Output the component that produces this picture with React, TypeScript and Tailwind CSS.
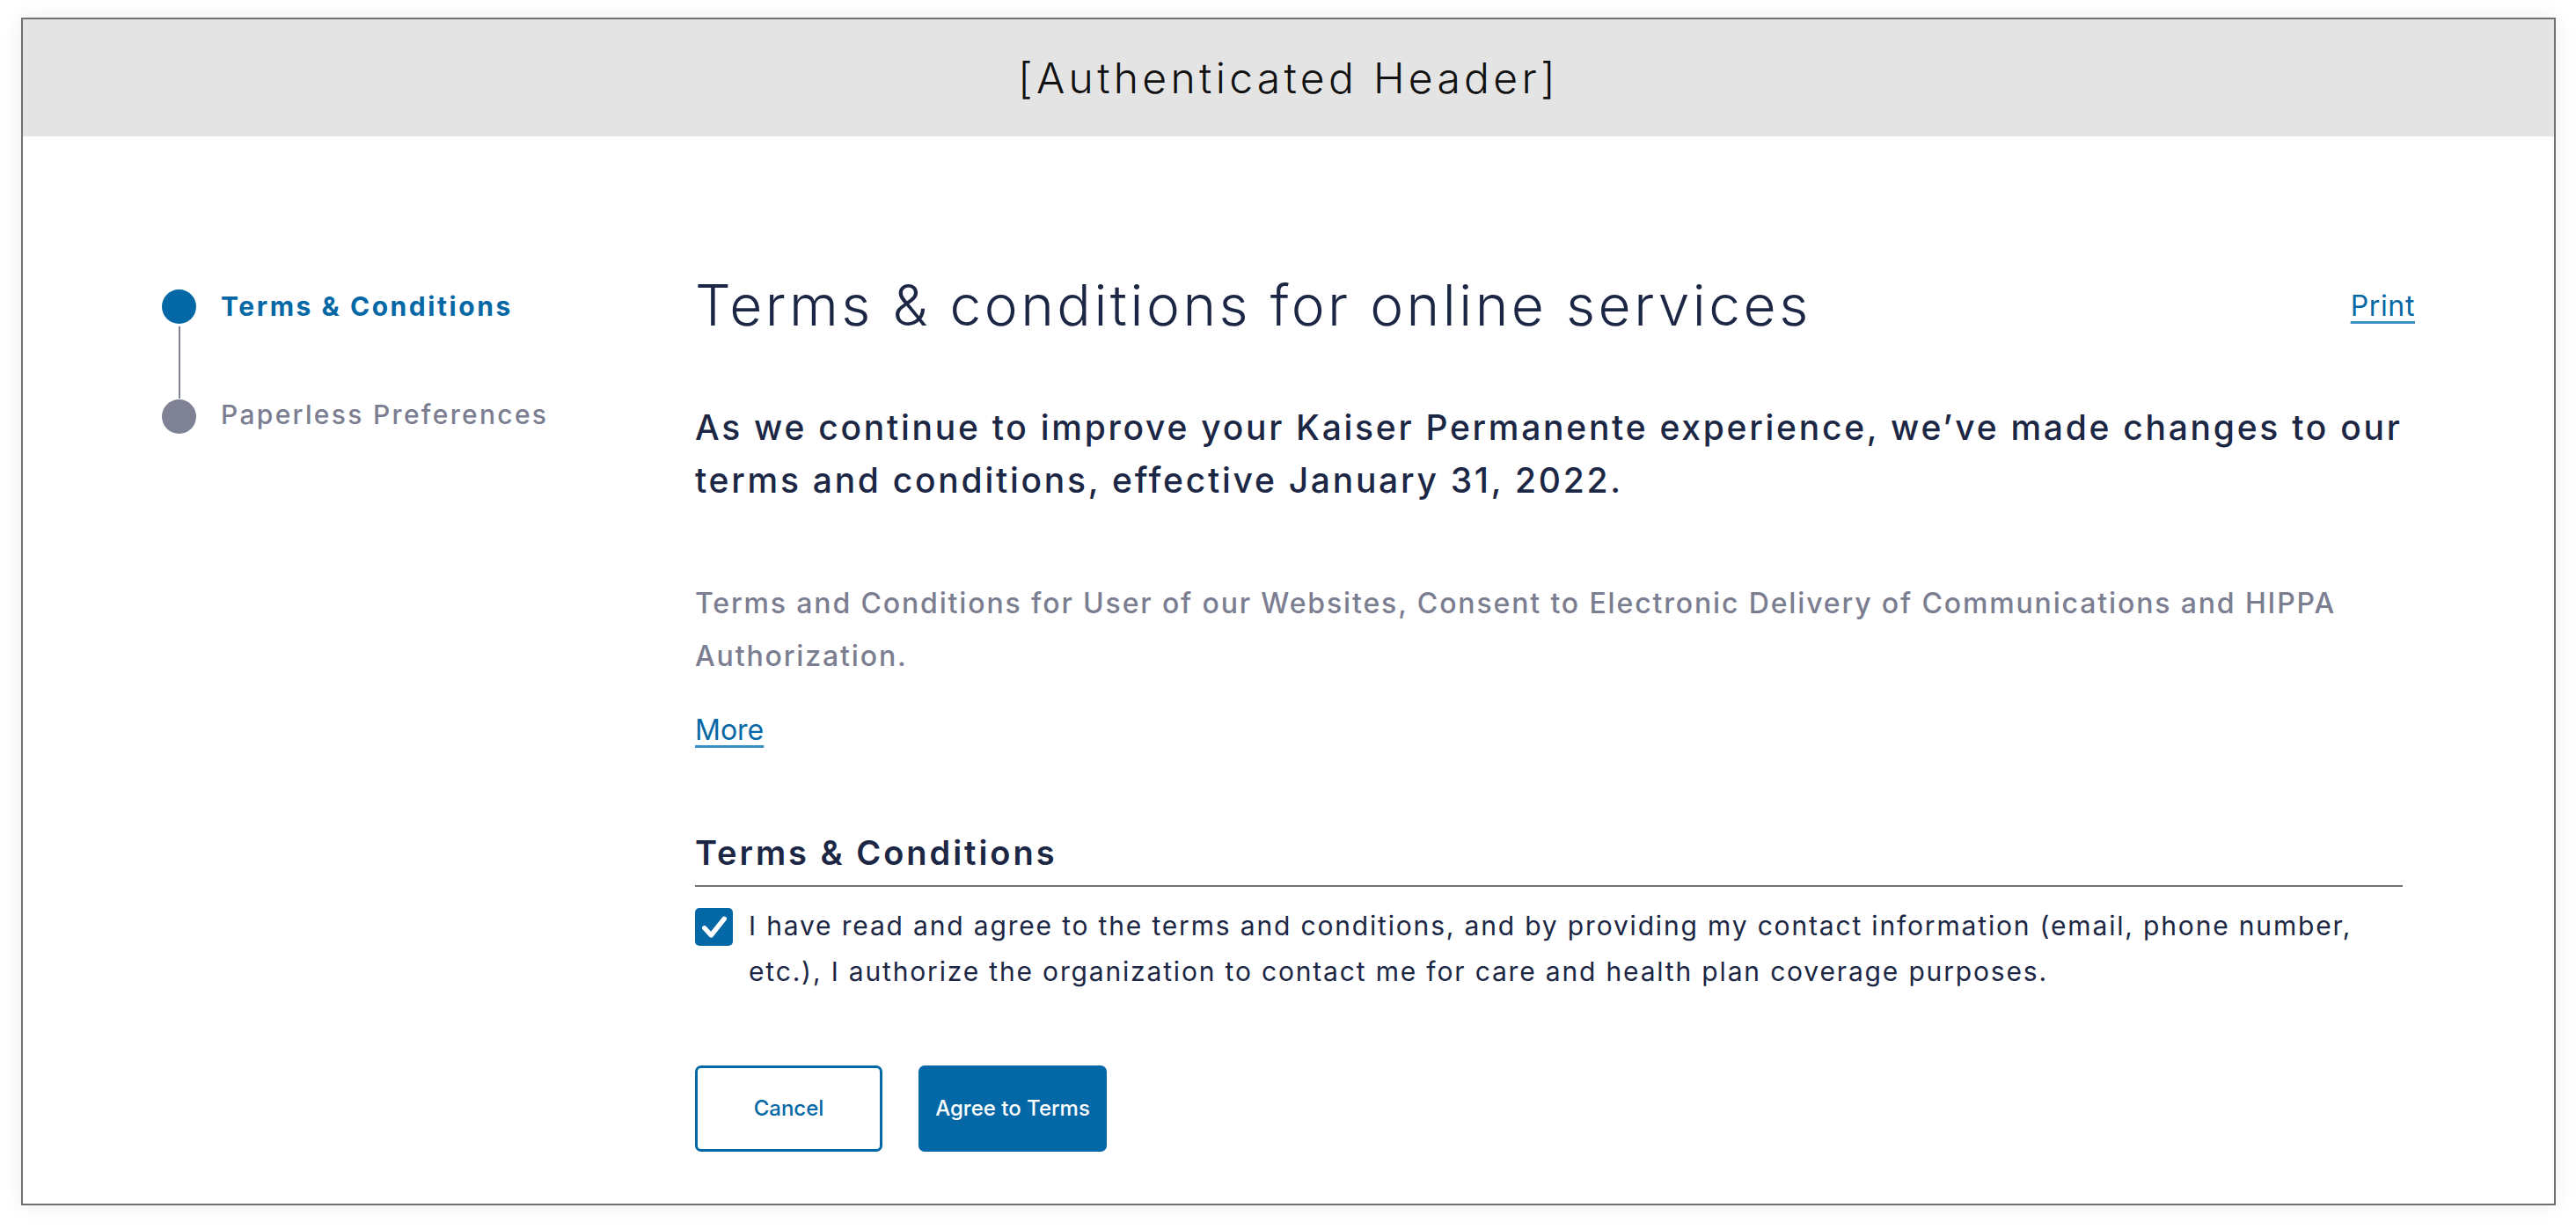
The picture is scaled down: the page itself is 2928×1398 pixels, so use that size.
import React, { useState } from 'react';

const font = { fontFamily: 'Inter, "Noto Sans", sans-serif' };

function Stepper() {
  return (
    <div className="w-[606px] shrink-0">
      <div className="flex items-center gap-[28px]">
        <span className="w-[39px] h-[39px] rounded-full bg-[#0568a6] shrink-0" />
        <span className="text-[30px] font-bold text-[#0568a6] tracking-[0.085em]">Terms &amp; Conditions</span>
      </div>
      <div className="w-[39px] flex justify-center">
        <div className="w-[2px] h-[82px] bg-[#7f8294]" />
      </div>
      <div className="flex items-center gap-[28px]">
        <span className="w-[39px] h-[39px] rounded-full bg-[#7f8294] shrink-0" />
        <span className="-mt-[4px] text-[30px] font-medium text-[#7b7e91] tracking-[0.077em]">Paperless Preferences</span>
      </div>
    </div>
  );
}

export default function App() {
  const [agreed, setAgreed] = useState(true);

  return (
    <div className="min-h-screen bg-white pt-[20px] pl-[24px]" style={font}>
      <div className="w-[2881px] h-[1350px] border-2 border-[#707070] bg-white shadow-[0_0_24px_rgba(0,0,0,0.07)] flex flex-col">
        <header className="h-[133px] bg-[#e4e4e4] flex items-center justify-center">
          <span className="text-[48px] font-light text-[#111] tracking-[0.09em]">[Authenticated Header]</span>
        </header>

        <main className="flex px-[158px] pt-[171px]">
          <Stepper />

          <section className="flex-1 -mt-[18px] text-[#1b2744]">
            <div className="flex items-start justify-between">
              <h1 className="text-[64px] font-light leading-[77px] tracking-[0.055em]">
                Terms &amp; conditions for online services
              </h1>
              <a href="#" className="mt-[20px] text-[32px] leading-[40px] tracking-[0.02em] text-[#0568a6] underline underline-offset-[6px] decoration-[3px] decoration-[#3a8fc4]">
                Print
              </a>
            </div>

            <p className="mt-[71px] w-[1955px] text-[39px] font-medium leading-[60px] tracking-[0.07em]">
              As we continue to improve your Kaiser Permanente experience, we’ve made changes to our terms and conditions, effective January 31, 2022.
            </p>

            <p className="mt-[80px] w-[1955px] text-[32px] font-medium leading-[60px] text-[#7b7e91] tracking-[0.058em]">
              Terms and Conditions for User of our Websites, Consent to Electronic Delivery of Communications and HIPPA Authorization.
            </p>

            <a href="#" className="block w-fit mt-[24px] text-[32px] leading-[60px] text-[#0568a6] underline underline-offset-[6px] decoration-[3px] decoration-[#3a8fc4]">
              More
            </a>

            <div className="mt-[85px] w-[1941px]">
              <h2 className="text-[38px] font-semibold leading-[48px] tracking-[0.078em] pb-[13px] border-b-2 border-[#707070]">
                Terms &amp; Conditions
              </h2>
              <label className="mt-[18px] flex items-start gap-[18px] cursor-pointer">
                <button
                  type="button"
                  onClick={() => setAgreed(!agreed)}
                  className={`mt-[6px] w-[43px] h-[43px] rounded-[5px] shrink-0 flex items-center justify-center ${agreed ? 'bg-[#0568a6]' : 'border-2 border-[#0568a6] bg-white'}`}
                >
                  {agreed && (
                    <svg viewBox="0 0 24 24" className="w-[36px] h-[36px]" fill="none" stroke="white" strokeWidth="3.6" strokeLinecap="round" strokeLinejoin="round">
                      <path d="M4.5 12.5l5 5.5L19.5 5.5" />
                    </svg>
                  )}
                </button>
                <span className="w-[1894px] text-[30px] leading-[52px] tracking-[0.061em]">
                  I have read and agree to the terms and conditions, and by providing my contact information (email, phone number, etc.), I authorize the organization to contact me for care and health plan coverage purposes.
                </span>
              </label>
            </div>

            <div className="mt-[81px] flex gap-[41px]">
              <button className="w-[213px] h-[98px] rounded-[7px] border-[3px] border-[#0568a6] bg-white text-[24px] font-medium text-[#0568a6]">
                Cancel
              </button>
              <button className="w-[214px] h-[98px] rounded-[7px] bg-[#0568a6] text-[24px] font-medium text-white">
                Agree to Terms
              </button>
            </div>
          </section>
        </main>
      </div>
    </div>
  );
}
